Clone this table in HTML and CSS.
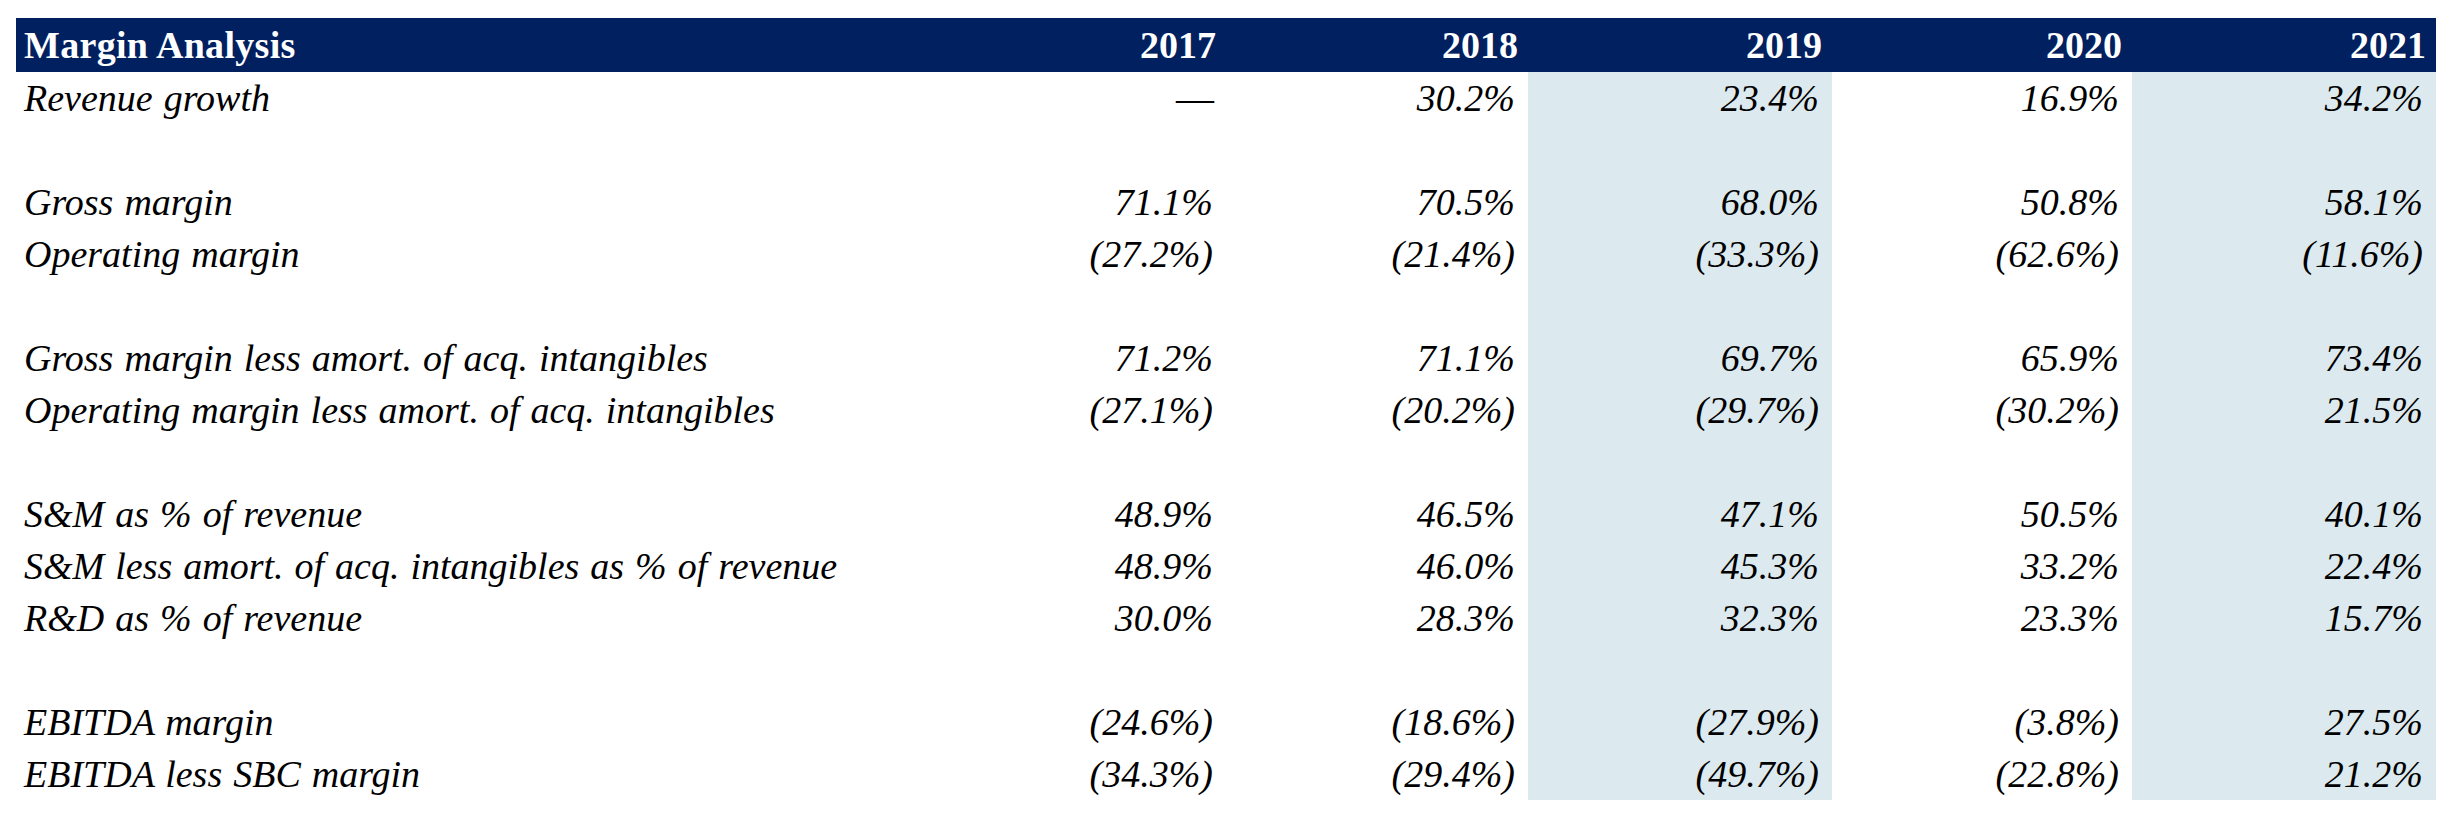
FILE: index.html
```html
<!DOCTYPE html>
<html lang="en">
<head>
<meta charset="utf-8">
<title>Margin Analysis</title>
<link rel="stylesheet" href="styles.css">
</head>
<body>
<table class="margins">
  <colgroup>
    <col class="c-label">
    <col class="c-y302">
    <col class="c-y302">
    <col class="c-y304">
    <col class="c-y300">
    <col class="c-y304">
  </colgroup>
  <thead>
    <tr class="head">
      <th class="title">Margin Analysis</th>
      <th>2017</th>
      <th>2018</th>
      <th>2019</th>
      <th>2020</th>
      <th>2021</th>
    </tr>
  </thead>
  <tbody>
    <tr><td class="label">Revenue growth</td><td class="dash">—</td><td>30.2%</td><td class="hl">23.4%</td><td>16.9%</td><td class="hl">34.2%</td></tr>
    <tr class="blank"><td class="label"></td><td></td><td></td><td class="hl"></td><td></td><td class="hl"></td></tr>
    <tr><td class="label">Gross margin</td><td>71.1%</td><td>70.5%</td><td class="hl">68.0%</td><td>50.8%</td><td class="hl">58.1%</td></tr>
    <tr><td class="label">Operating margin</td><td>(27.2%)</td><td>(21.4%)</td><td class="hl">(33.3%)</td><td>(62.6%)</td><td class="hl">(11.6%)</td></tr>
    <tr class="blank"><td class="label"></td><td></td><td></td><td class="hl"></td><td></td><td class="hl"></td></tr>
    <tr><td class="label">Gross margin less amort. of acq. intangibles</td><td>71.2%</td><td>71.1%</td><td class="hl">69.7%</td><td>65.9%</td><td class="hl">73.4%</td></tr>
    <tr><td class="label">Operating margin less amort. of acq. intangibles</td><td>(27.1%)</td><td>(20.2%)</td><td class="hl">(29.7%)</td><td>(30.2%)</td><td class="hl">21.5%</td></tr>
    <tr class="blank"><td class="label"></td><td></td><td></td><td class="hl"></td><td></td><td class="hl"></td></tr>
    <tr><td class="label">S&amp;M as % of revenue</td><td>48.9%</td><td>46.5%</td><td class="hl">47.1%</td><td>50.5%</td><td class="hl">40.1%</td></tr>
    <tr><td class="label">S&amp;M less amort. of acq. intangibles as % of revenue</td><td>48.9%</td><td>46.0%</td><td class="hl">45.3%</td><td>33.2%</td><td class="hl">22.4%</td></tr>
    <tr><td class="label">R&amp;D as % of revenue</td><td>30.0%</td><td>28.3%</td><td class="hl">32.3%</td><td>23.3%</td><td class="hl">15.7%</td></tr>
    <tr class="blank"><td class="label"></td><td></td><td></td><td class="hl"></td><td></td><td class="hl"></td></tr>
    <tr><td class="label">EBITDA margin</td><td>(24.6%)</td><td>(18.6%)</td><td class="hl">(27.9%)</td><td>(3.8%)</td><td class="hl">27.5%</td></tr>
    <tr><td class="label">EBITDA less SBC margin</td><td>(34.3%)</td><td>(29.4%)</td><td class="hl">(49.7%)</td><td>(22.8%)</td><td class="hl">21.2%</td></tr>
  </tbody>
</table>
</body>
</html>
```

FILE: styles.css
```css
html, body {
  margin: 0;
  padding: 0;
  background: #ffffff;
}

body {
  padding: 18px 0 0 16px;
  font-family: "Liberation Serif", "Times New Roman", serif;
  color: #000000;
}

.margins {
  border-collapse: collapse;
  border-spacing: 0;
  table-layout: fixed;
  width: 2420px;
  font-size: 38px;
}

.c-label { width: 908px; }
.c-y302 { width: 302px; }
.c-y304 { width: 304px; }
.c-y300 { width: 300px; }

.head th {
  background: #002060;
  color: #ffffff;
  font-weight: bold;
  height: 54px;
  line-height: 54px;
  padding: 0 10px 0 8px;
  text-align: right;
  white-space: nowrap;
}

.head th.title {
  text-align: left;
  letter-spacing: 0.3px;
}

tbody td {
  height: 52px;
  line-height: 52px;
  padding: 0 13px 0 8px;
  text-align: right;
  font-style: italic;
  white-space: nowrap;
}

tbody td.label {
  text-align: left;
  padding-left: 8px;
  word-spacing: 1.5px;
}

tbody td.dash {
  font-style: normal;
  padding-right: 12px;
}

tbody td.hl {
  background: #dce9ee;
}
```
